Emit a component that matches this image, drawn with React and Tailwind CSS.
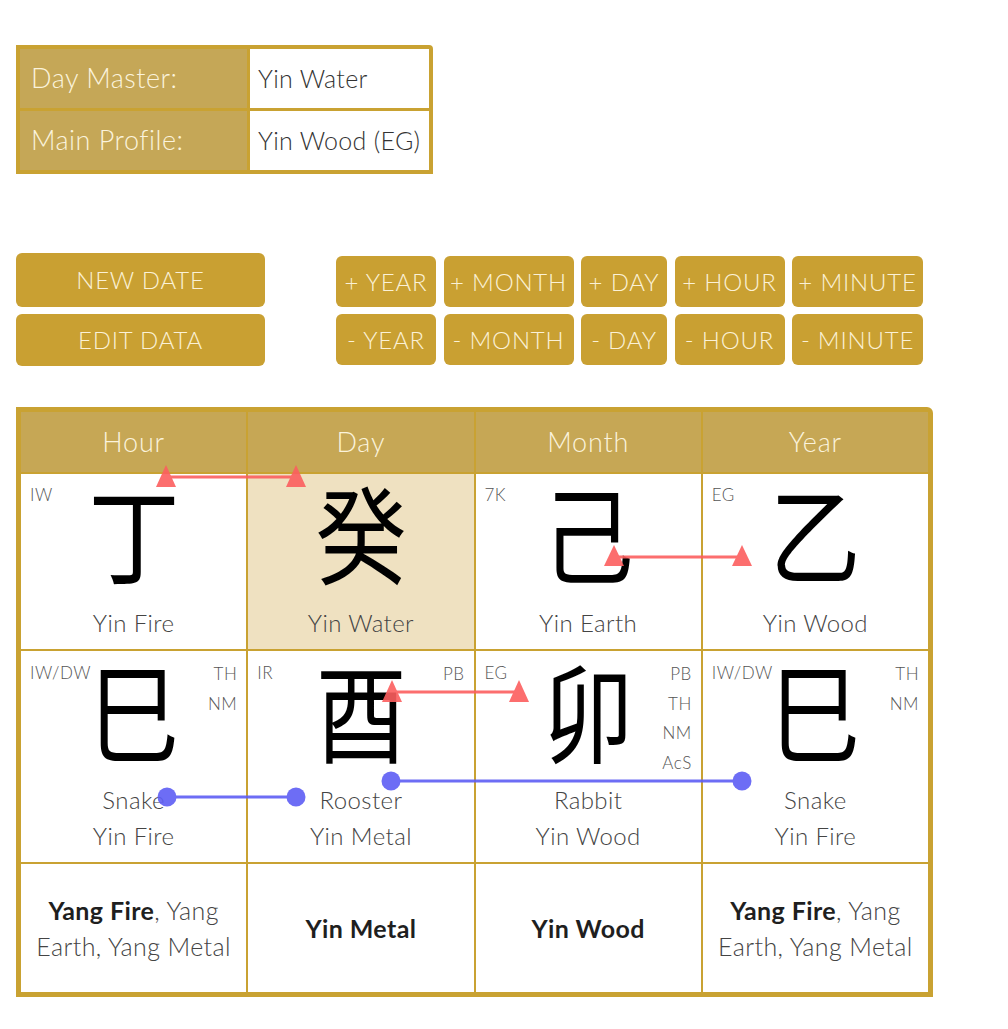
import React from "react";

function Stem({ label, ch, text, bg = "bg-white" }) {
  return (
    <div className={`relative ${bg} h-[175px] flex flex-col items-center`}>
      <span className="absolute left-[9px] top-[11px] text-[17px] leading-[20px] tracking-[0.5px] text-[#555]">{label}</span>
      <div className="mt-[3px] h-[106px] text-[106px] leading-[106px] scale-x-[0.86] text-black font-['Noto_Sans_CJK_SC',sans-serif] font-normal">
        {ch}
      </div>
      <div className="mt-[25px] text-[24px] leading-[30px] tracking-[0.4px] text-[#444]">{text}</div>
    </div>
  );
}

function Branch({ left, right = [], ch, animal, element }) {
  return (
    <div className="relative bg-white h-[211px] flex flex-col items-center">
      <span className="absolute left-[9px] top-[12px] text-[17px] leading-[20px] tracking-[0.5px] text-[#555]">{left}</span>
      <div className="absolute right-[9px] top-[8px] flex flex-col items-end text-[17px] leading-[29.5px] tracking-[0.5px] text-[#555]">
        {right.map((r) => (
          <span key={r}>{r}</span>
        ))}
      </div>
      <div className="mt-[3px] h-[108px] text-[108px] leading-[108px] scale-x-[0.84] text-black font-['Noto_Sans_CJK_SC',sans-serif] font-normal">
        {ch}
      </div>
      <div className="mt-[20px] flex flex-col items-center text-[24px] leading-[36px] tracking-[0.4px] text-[#444]">
        <span>{animal}</span>
        <span>{element}</span>
      </div>
    </div>
  );
}

function Hidden({ children }) {
  return (
    <div className="bg-white h-[128px] flex items-center justify-center px-[8px] text-center text-[25px] leading-[36px] tracking-[0.4px] text-[#444]">
      <div>{children}</div>
    </div>
  );
}

export default function App() {
  const btn = "bg-[#c9a032] rounded-[6px] flex items-center justify-center text-[#fbf1d6] text-[24px] tracking-[0.8px] font-light";
  return (
    <div className="relative w-[1008px] h-[1029px] bg-white font-['Lato',sans-serif] font-light pt-[45px] pl-[16px]">
      {/* Info table */}
      <div className="w-[417px] border-4 border-[#c9a232] bg-[#c9a232] rounded-tr-[4px] grid grid-cols-[227px_179px] gap-[3px]">
        <div className="h-[59px] bg-[#c5a757] flex items-center pl-[11px] text-[27px] tracking-[0.5px] text-[#fbf3dc]">Day Master:</div>
        <div className="h-[59px] bg-white flex items-center pl-[8px] text-[25px] tracking-[0.3px] text-[#333]">Yin Water</div>
        <div className="h-[59px] bg-[#c5a757] flex items-center pl-[11px] text-[27px] tracking-[0.5px] text-[#fbf3dc]">Main Profile:</div>
        <div className="h-[59px] bg-white flex items-center pl-[8px] text-[25px] tracking-[0.3px] text-[#333]">Yin Wood (EG)</div>
      </div>

      {/* Buttons */}
      <div className="mt-[79px] flex items-start gap-[71px]">
        <div className="flex flex-col gap-[7px] w-[249px]">
          <div className={`${btn} h-[54px]`}>NEW DATE</div>
          <div className={`${btn} h-[52px]`}>EDIT DATA</div>
        </div>
        <div className="mt-[3px] grid grid-cols-[100px_130px_86px_110px_131px] gap-x-[7.5px] gap-y-[7px]">
          {["+ YEAR", "+ MONTH", "+ DAY", "+ HOUR", "+ MINUTE", "- YEAR", "- MONTH", "- DAY", "- HOUR", "- MINUTE"].map((t) => (
            <div key={t} className={`${btn} h-[51px]`}>{t}</div>
          ))}
        </div>
      </div>

      {/* Main chart */}
      <div className="mt-[41px] w-[917px] border-[5px] border-[#c9a232] bg-[#c9a232] rounded-tr-[6px] grid grid-cols-4 gap-[2px]">
        {["Hour", "Day", "Month", "Year"].map((h) => (
          <div key={h} className="h-[60px] bg-[#c6a755] flex items-center justify-center text-[27px] tracking-[0.8px] text-[#fbf3dc]">
            {h}
          </div>
        ))}
        <Stem label="IW" ch="丁" text="Yin Fire" />
        <Stem label="" ch="癸" text="Yin Water" bg="bg-[#efe1c1]" />
        <Stem label="7K" ch="己" text="Yin Earth" />
        <Stem label="EG" ch="乙" text="Yin Wood" />

        <Branch left="IW/DW" right={["TH", "NM"]} ch="巳" animal="Snake" element="Yin Fire" />
        <Branch left="IR" right={["PB"]} ch="酉" animal="Rooster" element="Yin Metal" />
        <Branch left="EG" right={["PB", "TH", "NM", "AcS"]} ch="卯" animal="Rabbit" element="Yin Wood" />
        <Branch left="IW/DW" right={["TH", "NM"]} ch="巳" animal="Snake" element="Yin Fire" />

        <Hidden>
          <span className="font-bold text-[#1f1f1f]">Yang Fire</span>, Yang Earth, Yang Metal
        </Hidden>
        <Hidden>
          <span className="font-bold text-[#1f1f1f]">Yin Metal</span>
        </Hidden>
        <Hidden>
          <span className="font-bold text-[#1f1f1f]">Yin Wood</span>
        </Hidden>
        <Hidden>
          <span className="font-bold text-[#1f1f1f]">Yang Fire</span>, Yang Earth, Yang Metal
        </Hidden>
      </div>

      {/* Relation overlays */}
      <svg className="absolute left-0 top-0 pointer-events-none" width="1008" height="1029" viewBox="0 0 1008 1029">
        <g fill="#fc5f5f" stroke="#fc5f5f" opacity="0.9">
          <line x1="166" y1="477" x2="296" y2="477" strokeWidth="3" />
          <polygon points="166,465 176,487 156,487" stroke="none" />
          <polygon points="296,465 306,487 286,487" stroke="none" />

          <line x1="614" y1="557" x2="742" y2="557" strokeWidth="3" />
          <polygon points="614,545 624,566 604,566" stroke="none" />
          <polygon points="742,545 752,566 732,566" stroke="none" />

          <line x1="392" y1="692" x2="519" y2="692" strokeWidth="3" />
          <polygon points="392,680 402,702 382,702" stroke="none" />
          <polygon points="519,680 529,702 509,702" stroke="none" />
        </g>
        <g fill="#5e5ef4" stroke="#5e5ef4" opacity="0.9">
          <line x1="167" y1="797" x2="296" y2="797" strokeWidth="3" />
          <circle cx="167" cy="797" r="9.5" stroke="none" />
          <circle cx="296" cy="797" r="9.5" stroke="none" />

          <line x1="391" y1="781" x2="742" y2="781" strokeWidth="3" />
          <circle cx="391" cy="781" r="9.5" stroke="none" />
          <circle cx="742" cy="781" r="9.5" stroke="none" />
        </g>
      </svg>
    </div>
  );
}
